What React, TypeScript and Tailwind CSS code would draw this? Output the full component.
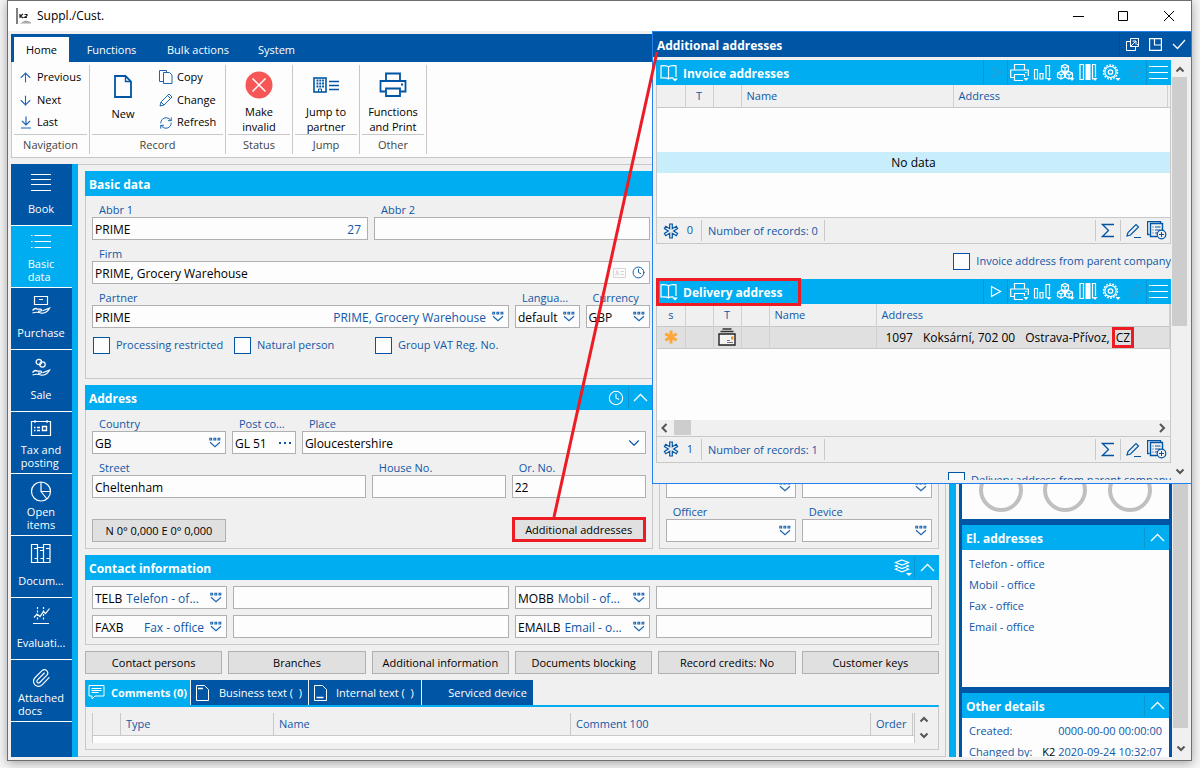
import React from "react";
import { ArrowDown, ArrowUp, ChevronDown, ChevronUp, Clock, Paperclip, Pin, RefreshCw } from "lucide-react";

/* ---------- icons ---------- */

function LookupIcon() {
  return (
    <svg width="12" height="11" viewBox="0 0 12 11" fill="none" stroke="#1c66b3">
      <path d="M.8 1.2h1.8v1.8H.8zM4.9 1.2h1.8v1.8H4.9zM9 1.2h1.8v1.8H9z" strokeWidth="1.1" />
      <path d="M1 5.2l5 4.6 5-4.6" strokeWidth="1.2" />
    </svg>
  );
}

function PrinterIcon() {
  return (
    <svg width="28" height="28" viewBox="0 0 28 28" fill="none" stroke="#0055a5" strokeWidth="1.8">
      <path d="M7 10V2.500h14V10M6.500 20.500H1.500V10h25v10.500h-5" />
      <path d="M7 17.500h14V25H7z" />
      <path d="M22 13.500h2" />
    </svg>
  );
}

function LogoIcon() {
  return (
    <svg width="17" height="17" viewBox="0 0 17 17">
      <rect x="0" y="0" width="2" height="16" fill="#808080" />
      <path d="M4 6v4M7 6L4.500 8 7 10M8.500 6.500h2.500v1.200L8.500 9.500H11" stroke="#222" strokeWidth="1.200" fill="none" />
      <path d="M3 15.500c3 0 4-3 7-3l5 1.500v1.500z" fill="#aaa" />
    </svg>
  );
}

function FileIcon() {
  return (
    <svg width="18" height="23" viewBox="0 0 18 23" fill="none" stroke="#0055a5" strokeWidth="1.800">
      <path d="M1 1h10.500L17 6.500V22H1z" />
      <path d="M11.500 1v5.500H17" strokeWidth="1.400" />
    </svg>
  );
}

function CopyIcon() {
  return (
    <svg width="14" height="14" viewBox="0 0 14 14" fill="none" stroke="#1c66b3">
      <path d="M4.500 11.500h-4v-11h7v2" />
      <path d="M4.500 2.500h6l2.500 2.500v8.500H4.500z" />
    </svg>
  );
}

function PencilIcon() {
  return (
    <svg width="14" height="14" viewBox="0 0 14 14" fill="none" stroke="#1c66b3">
      <path d="M1 13l1-4L10 1l3 3-8 8zM8.500 2.500l3 3M2 9l3 3" />
    </svg>
  );
}

function LastIcon() {
  return (
    <svg width="12" height="13" viewBox="0 0 12 13" fill="none" stroke="#1c66b3" strokeWidth="1.200">
      <path d="M6 .5v8.500M2 5l4 4 4-4M1 12h10" />
    </svg>
  );
}

function InvalidIcon() {
  return (
    <svg width="28" height="28" viewBox="0 0 28 28">
      <circle cx="14" cy="14" r="13.500" fill="#f75656" />
      <path d="M7.500 7.500l13 13M20.500 7.500l-13 13" stroke="#fff" strokeWidth="1.500" />
    </svg>
  );
}

function PartnerIcon() {
  return (
    <svg width="27" height="17" viewBox="0 0 27 17" fill="none" stroke="#0055a5">
      <rect x="1" y="1" width="12" height="14" strokeWidth="1.600" />
      <path d="M3.500 3.500h7.500M3.500 6.500h7.500M3.500 9.500h7.500" strokeWidth="1.800" strokeDasharray="1.900 .9" />
      <path d="M5.500 15v-3h3v3" />
      <path d="M16 4.500h10M16 8.500h10M16 12.500h10" strokeWidth="1.400" />
    </svg>
  );
}

function BookIcon() {
  return (
    <svg width="18" height="18" viewBox="0 0 18 18" fill="none" stroke="#fff" strokeWidth="1.200">
      <path d="M8.500 3C7.500 1.500 5 1.500 1 1.800V14c4-.3 6.500-.3 7.500 1 1-1.300 2.500-1.300 5-1.200M8.500 3C9.500 1.500 12 1.500 16 1.800V13M8.500 3v12" />
      <path d="M12 14.500h6l-3 3z" fill="#fff" stroke="none" />
    </svg>
  );
}

function Caret() {
  return <path d="M13.500 15h5l-2.500 3z" fill="#fff" stroke="none" />;
}

function ToolSvg({ children }: { children: React.ReactNode }) {
  return (
    <svg width="19" height="19" viewBox="0 0 19 19" fill="none" stroke="#fff" strokeWidth="1.200">
      {children}
      <Caret />
    </svg>
  );
}

function PrintTool() {
  return (
    <ToolSvg>
      <path d="M4.500 7V1.500h10V7M4 14.500H.7V7h17.600v6" />
      <path d="M13 17.500H4.500v-6h10V14M15 9.500h1.500" />
    </ToolSvg>
  );
}

function ChartTool() {
  return (
    <ToolSvg>
      <path d="M1.500 6.500h3v9.500h-3zM7 10.500h3v5.500H7zM16.500 14V2.500h-3.500V16" />
    </ToolSvg>
  );
}

function CubesTool() {
  return (
    <ToolSvg>
      <path d="M9 1.500l3.500 1.700v4L9 9 5.500 7.200v-4zM5 8.500l3.500 1.700v4L5 16l-3.500-1.800v-4zM13 8.500l3.500 1.700v4L13 16l-3.500-1.800v-4z" />
      <path d="M5.500 3.200L9 5l3.500-1.800M9 5v4M1.500 10.200L5 12l3.500-1.800M5 12v4M9.500 10.200L13 12l3.500-1.800M13 12v4" />
    </ToolSvg>
  );
}

function ColumnsTool() {
  return (
    <ToolSvg>
      <path d="M1 1.500h3.500v15H1zM16.500 14V1.500h-3v15" />
      <path d="M6.500 1h5v16h-5z" fill="#fff" stroke="none" />
    </ToolSvg>
  );
}

function GearTool() {
  return (
    <ToolSvg>
      <circle cx="8.500" cy="9" r="7" strokeWidth="1.400" strokeDasharray="2 1.142" />
      <circle cx="8.500" cy="9" r="5.600" />
      <circle cx="8.500" cy="9" r="2.200" strokeWidth="1.300" />
    </ToolSvg>
  );
}

function LayersIcon() {
  return (
    <svg width="19" height="19" viewBox="0 0 19 19" fill="none" stroke="#fff" strokeWidth="1.200">
      <path d="M8 2l6.500 2.500L8 7 1.500 4.500zM3.500 7L1.500 8 8 10.500 14.500 8l-2-1M3.500 10.300l-2 1L8 13.800l6.500-2.500-2-1" />
      <path d="M12 15h6l-3 3z" fill="#fff" stroke="none" />
    </svg>
  );
}

function AsteriskIcon() {
  return (
    <svg width="16" height="16" viewBox="0 0 16 16" fill="none" stroke="#0055a5">
      <path
        d="M6.700 1h2.600v4.700l4-2.400 1.300 2.200L10.700 8l3.900 2.500-1.300 2.200-4-2.400V15H6.700v-4.700l-4 2.400-1.300-2.200L5.300 8 1.400 5.500l1.300-2.200 4 2.400z"
        strokeWidth="1.200"
      />
    </svg>
  );
}

function RecordMark() {
  return (
    <svg width="14" height="14" viewBox="0 0 14 14" className="mx-auto" stroke="#ffa63a" strokeWidth="3">
      <path d="M7 .5v13M1.300 3.700l11.400 6.600M12.700 3.700L1.300 10.300" />
    </svg>
  );
}

function CardIcon() {
  return (
    <svg width="18" height="18" viewBox="0 0 18 18" className="mx-auto" fill="none">
      <path d="M4.500 1h9M2.500 3.500h13" stroke="#333" strokeWidth="1.300" />
      <path d="M1 6h16v11H1z" fill="#f4f4f4" stroke="#222" strokeWidth="1.400" />
      <path d="M13 8.500h2.500v3H13z" fill="#f78f2a" />
      <path d="M9 12.500h3M9 14.500h6" stroke="#777" />
    </svg>
  );
}

function ScrollArrow({ d, className = "" }: { d: string; className?: string }) {
  return (
    <svg width="12" height="12" viewBox="0 0 12 12" fill="none" stroke="#555" strokeWidth="2" className={className}>
      <path d={d} />
    </svg>
  );
}

const arrowUp = "M2.500 7.500L6 4l3.500 3.500";
const arrowDown = "M2.500 3.500L6 7l3.500-3.500";
const arrowLeft = "M7.500 2L3.500 6l4 4";
const arrowRight = "M4 2l4 4-4 4";

/* ---------- side navigation ---------- */

function NavSvg({ children }: { children: React.ReactNode }) {
  return (
    <svg width="22" height="22" viewBox="0 0 22 22" fill="none" stroke="#fff" strokeWidth="1.200">
      {children}
    </svg>
  );
}

const hand = "M2.500 15.500c1.500-1.800 3.500-2.500 5-1.300h3.500c1.200.8.500 2-.8 2H8M12.500 15.800l7-2.600c-1.500 2.800-4.500 5-8 5-2.500-1-5.500-1.500-9-.2";

const navItems = [
  { label: "Book", icon: <NavSvg><path d="M1 3.500h20M1 8.500h20M1 13.500h20M1 19.500h20" /></NavSvg> },
  {
    label: "Basic\ndata",
    active: true,
    icon: (
      <NavSvg>
        <path d="M4.500 2.500H21M4.500 8.500H21M4.500 14.500H21" />
        <path d="M1 2.500h1.500M1 8.500h1.500M1 14.500h1.500" />
      </NavSvg>
    ),
  },
  {
    label: "Purchase",
    icon: (
      <NavSvg>
        <path d="M4.500 1.500h13v8h-13zM9 4.500h4" />
        <path d={hand} />
      </NavSvg>
    ),
  },
  {
    label: "Sale",
    icon: (
      <NavSvg>
        <circle cx="8.800" cy="5" r="2.700" />
        <circle cx="12.500" cy="7.500" r="2.700" />
        <path d={hand} />
      </NavSvg>
    ),
  },
  {
    label: "Tax and\nposting",
    icon: (
      <NavSvg>
        <path d="M1.500 2.500h19v14h-19zM5 1v3M17 1v3" />
        <path d="M4 8.500h1.500M4 11.500h1.500M7 8.500h3M7 11.500h3M12.500 7.500h4v4h-4z" strokeWidth="1.400" />
      </NavSvg>
    ),
  },
  {
    label: "Open\nitems",
    icon: (
      <NavSvg>
        <circle cx="11" cy="10.500" r="9.500" />
        <path d="M11 1v9.500h9.500M11 10.500l6 7.500" />
      </NavSvg>
    ),
  },
  {
    label: "Docum...",
    icon: (
      <NavSvg>
        <path d="M1.500 1.500h6v18h-6zM7.500 4.500h6v15h-6zM13.500 1.500h6.500v18h-6.500z" />
        <path d="M4 5.500h3.500M4.500 15.500h3M10 7.500h3.500M10.500 15.500h3M16 5.500h3.500M16.500 15.500h3" />
      </NavSvg>
    ),
  },
  {
    label: "Evaluati...",
    icon: (
      <NavSvg>
        <path d="M4 12.500l3-3.500 3 2.500 3.500-5 2 2 4-5M3 18.500h16" />
        <path d="M7.500 2v14M13.500 2v14" strokeDasharray="2 1.500" />
      </NavSvg>
    ),
  },
  { label: "Attached\ndocs", icon: <Paperclip size={20} color="#fff" strokeWidth={1.400} /> },
];

function SideNav() {
  return (
    <nav className="w-[67px] shrink-0 border-r-6 border-[#00adf0] bg-[#0055a5]">
      {navItems.map((item) => (
        <button
          key={item.label}
          className={`flex h-[62px] w-full flex-col items-center border-b border-white pb-1 pr-px text-white ${item.active ? "bg-[#00adf0]" : ""}`}
        >
          <span className="flex h-[31px] items-center pt-1">{item.icon}</span>
          <span className="flex h-[26px] items-center whitespace-pre text-left text-[11px] leading-[13px]">{item.label}</span>
        </button>
      ))}
    </nav>
  );
}

/* ---------- ribbon ---------- */

function RibbonGroup({ title, width, children }: { title: string; width: string; children: React.ReactNode }) {
  return (
    <div className={`my-[3px] flex shrink-0 flex-col border-r border-[#c8c8c8] px-[2px] ${width}`}>
      <div className="flex h-[70px] border-b border-[#c8c8c8] pt-px">{children}</div>
      <div className="pb-px pt-[2px] text-center leading-4 text-[#444]">{title}</div>
    </div>
  );
}

function SmallAction({ icon, label }: { icon: React.ReactNode; label: string }) {
  return (
    <button className="flex h-[23px] items-center gap-1 pl-1">
      <span className="flex w-[15px] justify-center">{icon}</span>
      {label}
    </button>
  );
}

function BigAction({ icon, label }: { icon: React.ReactNode; label: string }) {
  return (
    <button className="flex w-full flex-col items-center">
      <span className="flex h-10 items-center">{icon}</span>
      <span className="whitespace-pre leading-[15px]">{label}</span>
    </button>
  );
}

function Ribbon() {
  return (
    <div>
      <div className="flex h-7 bg-[#0055a5] pl-[3px] pt-[3px] text-white [&>button]:pt-px">
        <button className="w-[55px] bg-[#fdfdfd] text-black">Home</button>
        <button className="w-[85px]">Functions</button>
        <button className="w-[88px]">Bulk actions</button>
        <button className="w-[69px]">System</button>
      </div>
      <div className="flex border border-t-0 border-[#c8c8c8] bg-[#fdfdfd]">
        <RibbonGroup title="Navigation" width="w-[78px]">
          <div className="flex flex-col">
            <SmallAction icon={<ArrowUp size={15} strokeWidth={1.700} color="#1c66b3" />} label="Previous" />
            <SmallAction icon={<ArrowDown size={15} strokeWidth={1.700} color="#1c66b3" />} label="Next" />
            <SmallAction icon={<LastIcon />} label="Last" />
          </div>
        </RibbonGroup>
        <RibbonGroup title="Record" width="w-[136px]">
          <div className="w-[62px]">
            <BigAction icon={<FileIcon />} label="New" />
          </div>
          <div className="flex flex-col">
            <SmallAction icon={<CopyIcon />} label="Copy" />
            <SmallAction icon={<PencilIcon />} label="Change" />
            <SmallAction icon={<RefreshCw size={14} strokeWidth={1.700} color="#1c66b3" />} label="Refresh" />
          </div>
        </RibbonGroup>
        <RibbonGroup title="Status" width="w-[67px]">
          <BigAction icon={<InvalidIcon />} label={"Make\ninvalid"} />
        </RibbonGroup>
        <RibbonGroup title="Jump" width="w-[67px]">
          <BigAction icon={<PartnerIcon />} label={"Jump to\npartner"} />
        </RibbonGroup>
        <RibbonGroup title="Other" width="w-[67px]">
          <BigAction icon={<PrinterIcon />} label={"Functions\nand Print"} />
        </RibbonGroup>
      </div>
    </div>
  );
}

/* ---------- form parts ---------- */

type PanelProps = { title: string; tools?: React.ReactNode; className?: string; children: React.ReactNode };

function Panel({ title, tools, className = "", children }: PanelProps) {
  return (
    <section className={className}>
      <header className="flex h-[25px] items-center bg-[#00adf0] pl-1 text-white">
        <h2 className="flex-1 pt-[2px] text-xs font-bold">{title}</h2>
        {tools}
      </header>
      <div className="border border-t-0 border-[#c8c8c8] p-[6px]">{children}</div>
    </section>
  );
}

function Collapse() {
  return (
    <button aria-label="Collapse" className="my-[2px] flex w-[25px] items-center justify-center self-stretch border-l border-[#0b96d0]">
      <svg width="15" height="9" viewBox="0 0 15 9" fill="none" stroke="#fff" strokeWidth="1.300"><path d="M1 8l6.500-6.500L14 8" /></svg>
    </button>
  );
}

type FieldProps = {
  id: string;
  label?: string;
  name?: string;
  value?: string;
  note?: string;
  icon?: React.ReactNode;
  className?: string;
};

function Field({ id, label, name, value = "", note, icon, className = "" }: FieldProps) {
  const cut = note?.endsWith("...");
  return (
    <div className={`min-w-0 ${className}`}>
      {label && <label htmlFor={id} className="block h-[15px] truncate pl-[7px] leading-[15px] text-[#1057a7]">{label}</label>}
      <div className="flex h-[23px] items-center border border-[#b0b0b0] bg-[#fdfdfd] px-[2px] text-xs">
        <input
          id={id}
          aria-label={label ? undefined : name}
          defaultValue={value}
          className={`bg-transparent pt-[2px] outline-none ${note ? "field-sizing-content shrink-0" : "w-full min-w-0"}`}
        />
        {note && <span className={`min-w-0 flex-1 whitespace-nowrap px-1 pt-[2px] text-[#1057a7] ${cut ? "text-left" : "text-right"}`}>{note}</span>}
        {icon && <span className="flex shrink-0 items-center px-[2px]">{icon}</span>}
      </div>
    </div>
  );
}

function Lookup() {
  return <button aria-label="Look up"><LookupIcon /></button>;
}

function CheckBox({ id, label, className = "" }: { id: string; label: string; className?: string }) {
  return (
    <div className={`flex items-center gap-[6px] whitespace-nowrap text-[#1057a7] ${className}`}>
      <input id={id} type="checkbox" className="h-[17px] w-[17px] appearance-none border border-[#0055a5] bg-[#fdfdfd]" />
      <label htmlFor={id}>{label}</label>
    </div>
  );
}

function BasicData() {
  return (
    <Panel title="Basic data">
      <div className="grid grid-cols-12 gap-[6px] pb-[15px]">
        <Field id="abbr1" label="Abbr 1" value="PRIME" note="27" className="col-span-4" />
        <Field id="abbr2" label="Abbr 2" className="col-span-4" />
        <Field
          id="firm"
          label="Firm"
          value="PRIME, Grocery Warehouse"
          className="col-span-8 col-start-1"
          icon={
            <span className="flex items-center gap-[6px]">
              <svg width="13" height="10" viewBox="0 0 13 10" fill="none" stroke="#d5d5d5">
                <path d="M.5.500h12v9H.5zM2.500 7.500l1.700-5 1.700 5M3 6h2.500M7.500 3.500H11M7.500 6.500H11" />
              </svg>
              <Clock size={13} strokeWidth={1.800} color="#1057a7" />
            </span>
          }
        />
        <Field id="partner" label="Partner" value="PRIME" note="PRIME, Grocery Warehouse" icon={<Lookup />} className="col-span-6 col-start-1" />
        <Field id="language" label="Langua..." value="default" icon={<Lookup />} />
        <Field id="currency" label="Currency" value="GBP" icon={<Lookup />} />
        <CheckBox id="restricted" label="Processing restricted" className="col-span-2 col-start-1 h-[23px] pl-px" />
        <CheckBox id="natural" label="Natural person" className="col-span-2 h-[23px] pl-px" />
        <CheckBox id="groupvat" label="Group VAT Reg. No." className="col-span-2 h-[23px] pl-px" />
      </div>
    </Panel>
  );
}

function Address() {
  return (
    <Panel
      title="Address"
      className="min-w-0 flex-[567]"
      tools={
        <>
          <button aria-label="History" className="px-1"><Clock size={16} strokeWidth={1.600} /></button>
          <Collapse />
        </>
      }
    >
      <div className="grid grid-cols-8 gap-[6px]">
        <Field id="country" label="Country" value="GB" icon={<Lookup />} className="col-span-2" />
        <Field
          id="postcode"
          label="Post co..."
          value="GL 51"
          icon={
            <button aria-label="Choose post code">
              <svg width="12" height="2" viewBox="0 0 12 2" fill="#1057a7"><path d="M0 0h2v2H0zM5 0h2v2H5zM10 0h2v2h-2z" /></svg>
            </button>
          }
        />
        <div className="col-span-5">
          <label htmlFor="place" className="block h-[15px] pl-[7px] leading-[15px] text-[#1057a7]">Place</label>
          <div className="grid h-[23px] items-center border border-[#b0b0b0] bg-[#fdfdfd] text-xs">
            <select id="place" className="col-start-1 row-start-1 appearance-none pl-[2px] pt-[2px] outline-none">
              <option>Gloucestershire</option>
            </select>
            <ChevronDown size={18} strokeWidth={1.500} color="#1057a7" className="pointer-events-none col-start-1 row-start-1 mr-[2px] justify-self-end" />
          </div>
        </div>
        <Field id="street" label="Street" value="Cheltenham" className="col-span-4" />
        <Field id="house" label="House No." className="col-span-2" />
        <Field id="orno" label="Or. No." value="22" className="col-span-2" />
        <button className="col-span-2 mt-[15px] h-[23px] border border-[#b0b0b0] bg-[#e0e0e0] pt-px">N 0° 0,000 E 0° 0,000</button>
        <button className="col-span-2 col-start-7 mt-[13px] h-[25px] whitespace-nowrap border-3 border-[#ed1c24] bg-[#e0e0e0] pt-px">Additional addresses</button>
      </div>
    </Panel>
  );
}

function Responsible() {
  return (
    <Panel title="Responsible" className="min-w-0 flex-[280]">
      <div className="grid grid-cols-2 gap-[6px]">
        <Field id="centre" label="Centre" icon={<Lookup />} />
        <Field id="order" label="Order" icon={<Lookup />} />
        <Field id="contract" label="Contract" icon={<Lookup />} />
        <Field id="stock" label="Stock" icon={<Lookup />} />
        <Field id="officer" label="Officer" icon={<Lookup />} />
        <Field id="device" label="Device" icon={<Lookup />} />
      </div>
    </Panel>
  );
}

function Contacts() {
  return (
    <Panel
      title="Contact information"
      tools={
        <>
          <button aria-label="Layers" className="px-px"><LayersIcon /></button>
          <Collapse />
        </>
      }
    >
      <div className="grid grid-cols-12 gap-[6px]">
        <Field id="telb" name="Contact type" value="TELB" note="Telefon - of..." icon={<Lookup />} className="col-span-2" />
        <Field id="telv" name="Telephone" className="col-span-4" />
        <Field id="mobb" name="Contact type" value="MOBB" note="Mobil - of..." icon={<Lookup />} className="col-span-2" />
        <Field id="mobv" name="Mobile" className="col-span-4" />
        <Field id="faxb" name="Contact type" value="FAXB" note="Fax - office" icon={<Lookup />} className="col-span-2" />
        <Field id="faxv" name="Fax" className="col-span-4" />
        <Field id="mailb" name="Contact type" value="EMAILB" note="Email - o..." icon={<Lookup />} className="col-span-2" />
        <Field id="mailv" name="Email" className="col-span-4" />
      </div>
    </Panel>
  );
}

const actions = ["Contact persons", "Branches", "Additional information", "Documents blocking", "Record credits: No", "Customer keys"];

function PageIcon({ d }: { d: string }) {
  return (
    <svg width="13" height="16" viewBox="0 0 13 16" fill="none" stroke="#fff">
      <path d="M.5.500h8l4 4v11H.5z" />
      <path d={d} strokeWidth="1.500" />
    </svg>
  );
}

function Comments() {
  return (
    <div>
      <div className="flex h-[25px] gap-px text-white">
        <button className="flex w-[105px] items-center gap-[6px] whitespace-nowrap bg-[#00adf0] pl-[3px] font-bold">
          <svg width="17" height="15" viewBox="0 0 17 15" fill="none" stroke="#fff" className="shrink-0">
            <path d="M1 .5h15v10.500H7L4 14v-3H1zM3.500 3.500h10M3.500 5.500h10M3.500 7.500h7" />
          </svg>
          <span className="pt-px">Comments (0)</span>
        </button>
        <button className="flex w-[117px] items-center gap-[10px] bg-[#0055a5] pl-[5px]">
          <PageIcon d="M2 3.500h5" />
          <span className="pt-px">Business text (&nbsp; )</span>
        </button>
        <button className="flex w-[112px] items-center gap-[9px] bg-[#0055a5] pl-[5px]">
          <PageIcon d="M2.500 12.500h7" />
          <span className="pt-px">Internal text (&nbsp; )</span>
        </button>
        <button className="w-[111px] bg-[#0055a5] pl-5 pt-px">Serviced device</button>
      </div>
      <div className="flex border border-t-2 border-[#c8c8c8] border-t-[#00adf0] p-[6px]">
        <table className="flex-1 table-fixed border-x border-[#c8c8c8] text-left text-[#1057a7]">
          <thead>
            <tr className="h-[22px] border-b border-[#c8c8c8] [&>th]:border-r [&>th]:border-[#c8c8c8] [&>th]:px-[5px] [&>th]:font-normal">
              <th className="w-7" />
              <th className="w-[153px]">Type</th>
              <th className="w-[297px]">Name</th>
              <th>Comment 100</th>
              <th className="w-[42px]">Order</th>
              <th className="w-[2px] !border-0 !p-0" />
            </tr>
          </thead>
          <tbody>
            <tr className="h-2 bg-[#fdfdfd]"><td colSpan={6} /></tr>
          </tbody>
        </table>
        <div className="flex w-[17px] flex-col items-center justify-between py-px">
          <ScrollArrow d={arrowUp} />
          <ScrollArrow d={arrowDown} />
        </div>
      </div>
    </div>
  );
}

/* ---------- right sidebar ---------- */

function InfoPanel({ title, className = "", children }: { title: string; className?: string; children: React.ReactNode }) {
  return (
    <section className="shrink-0">
      <header className="flex h-[25px] items-center bg-[#00adf0] pl-1 text-white">
        <h2 className="flex-1 pt-[2px] text-xs font-bold">{title}</h2>
        <Collapse />
      </header>
      <div className={`bg-[#fdfdfd] px-[7px] ${className}`}>{children}</div>
    </section>
  );
}

function Sidebar() {
  return (
    <aside className="flex w-[213px] shrink-0 flex-col gap-[6px] overflow-hidden bg-[#0055a5] p-[3px] leading-[21px] text-[#1057a7] contain-size">
      <InfoPanel title="Overview" className="flex h-[327px] items-end justify-around pb-[7px]">
        <span className="h-11 w-11 rounded-full border-4 border-[#c0c0c0]" />
        <span className="h-11 w-11 rounded-full border-4 border-[#c0c0c0]" />
        <span className="h-11 w-11 rounded-full border-4 border-[#c0c0c0]" />
      </InfoPanel>
      <InfoPanel title="El. addresses" className="h-[137px] pt-[3px]">
        <p>Telefon - office</p>
        <p>Mobil - office</p>
        <p>Fax - office</p>
        <p>Email - office</p>
      </InfoPanel>
      <InfoPanel title="Other details" className="h-[60px] pt-[2px]">
        <p className="flex justify-between"><span>Created:</span><span>0000-00-00 00:00:00</span></p>
        <p className="flex justify-between"><span>Changed by:</span><span><span className="text-black">K2</span> 2020-09-24 10:32:07</span></p>
      </InfoPanel>
    </aside>
  );
}

/* ---------- additional addresses window ---------- */

function GridHeader({ title, idle }: { title: string; idle?: boolean }) {
  return (
    <header className="flex h-[25px] items-center bg-[#00adf0] pl-1 text-white [&>button]:flex [&>button]:h-full [&>button]:items-center [&>button]:justify-center">
      <BookIcon />
      <h2 className="flex-1 pl-[5px] pt-[2px] text-xs font-bold">{title}</h2>
      <button aria-label="Run" className={`w-6 border-l border-[#0b96d0] ${idle ? "text-[#2f9fd0]" : ""}`}>
        <svg width="12" height="13" viewBox="0 0 12 13" fill="none" stroke="currentColor" strokeWidth="1.200"><path d="M1.500 1.500l9 5-9 5z" /></svg>
      </button>
      <button aria-label="Print" className="w-6 border-l border-[#0b96d0]"><PrintTool /></button>
      <button aria-label="Chart" className="w-[23px]"><ChartTool /></button>
      <button aria-label="Cubes" className="w-[23px]"><CubesTool /></button>
      <button aria-label="Columns" className="w-[23px]"><ColumnsTool /></button>
      <button aria-label="Settings" className="w-[23px]"><GearTool /></button>
      <button aria-label="Pin" className="w-[23px] text-[#3a97c4]"><Pin size={16} strokeWidth={1.400} className="rotate-45" /></button>
      <button aria-label="Menu" className="w-[25px] border-l border-[#0b96d0] pr-px">
        <svg width="19" height="13" viewBox="0 0 19 13" stroke="#fff"><path d="M0 .5h19M0 6.500h19M0 12.500h19" /></svg>
      </button>
    </header>
  );
}

function GridFooter({ count }: { count: number }) {
  return (
    <footer className="flex h-[26px] items-center border border-t-0 border-[#c8c8c8] pl-[6px] pr-px text-[#1057a7]">
      <AsteriskIcon />
      <span className="w-[22px] text-center">{count}</span>
      <span className="border-x border-[#c8c8c8] px-[6px] leading-[21px]">Number of records: {count}</span>
      <span className="flex-1" />
      <button aria-label="Sum" className="flex h-[21px] w-[26px] items-center justify-center border-x border-[#c8c8c8]">
        <svg width="14" height="15" viewBox="0 0 14 15" fill="none" stroke="#0055a5" strokeWidth="1.300"><path d="M13 1.500H1.500l6 6-6 6H13" /></svg>
      </button>
      <button aria-label="Edit" className="flex w-6 justify-center">
        <svg width="15" height="15" viewBox="0 0 15 15" fill="none" stroke="#0055a5" strokeWidth="1.200"><path d="M1 13l1-3.500L10 1.500l2.500 2.500-8 8zM8 14.500h7" /></svg>
      </button>
      <button aria-label="Add" className="flex w-6 justify-center">
        <svg width="20" height="19" viewBox="0 0 20 19" fill="none" stroke="#0055a5">
          <path d="M2.500 13.500h-2V.5h13v2M10 15.500H3.500v-13h12V9" strokeWidth="1.400" />
          <path d="M5.500 6h1M8 6h5.500M5.500 9h1M8 9h5M5.500 12h1M8 12h2" />
          <circle cx="14.500" cy="13.500" r="4.300" fill="#f0f0f0" strokeWidth="1.200" />
          <path d="M12 13.500h5M14.500 11v5" />
        </svg>
      </button>
    </footer>
  );
}

const headRow = "h-[22px] border-b border-[#c8c8c8] bg-[#f0f0f0] text-[#1057a7] [&>th]:border-r [&>th]:border-[#d0d0d0] [&>th]:px-[5px] [&>th]:font-normal";

function AddressesWindow() {
  return (
    <div role="dialog" aria-label="Additional addresses" className="absolute -right-px top-[30px] w-[540px] border border-[#2383ee] bg-[#f0f0f0]">
      <header className="flex h-[25px] items-center bg-[#0055a5] pl-1 text-white">
        <h1 className="flex-1 pt-[2px] text-xs font-bold">Additional addresses</h1>
        <div className="flex items-center gap-[10px] self-stretch border-l border-[#004a94] pl-[6px] pr-[5px]">
          <svg width="13" height="13" viewBox="0 0 13 13" fill="none" stroke="#fff"><path d="M4 3.500H.5v9h9V9M6.500.500h6v6h-1.500M4.500.500h8v8h-8zM4 9l6-6M6.500 3H10v3.500" /></svg>
          <svg width="13" height="13" viewBox="0 0 13 13" fill="none" stroke="#fff"><path d="M.6.600h11.800v11.800H.6zM5.500.5V7h7" strokeWidth="1.200" /></svg>
          <svg width="14" height="11" viewBox="0 0 14 11" fill="none" stroke="#fff" strokeWidth="1.300"><path d="M1 5l4.500 4.500L13 1" /></svg>
        </div>
      </header>
      <div className="flex gap-px py-[3px] pl-[3px] pr-1">
        <div className="h-[420px] min-w-0 flex-1 overflow-hidden">
          <GridHeader title="Invoice addresses" idle />
          <div className="border border-t-0 border-[#c8c8c8] bg-[#fdfdfd]">
            <table className="w-full table-fixed text-left">
              <thead>
                <tr className={headRow}>
                  <th className="w-7" />
                  <th className="w-7 text-center">T</th>
                  <th className="w-7" />
                  <th className="w-[212px]">Name</th>
                  <th>Address</th>
                  <th className="w-[3px] !border-0 !p-0" />
                </tr>
              </thead>
              <tbody>
                <tr className="h-[45px]"><td colSpan={6} /></tr>
                <tr className="h-[21px] bg-[#c9eefb]"><td colSpan={6} className="pt-px text-center text-xs">No data</td></tr>
                <tr className="h-11"><td colSpan={6} /></tr>
              </tbody>
            </table>
          </div>
          <GridFooter count={0} />
          <CheckBox id="invparent" label="Invoice address from parent company" className="h-[35px] justify-end" />

          <div className="relative">
            <GridHeader title="Delivery address" />
            <span className="pointer-events-none absolute -top-px left-0 h-7 w-[145px] border-3 border-[#ed1c24]" />
          </div>
          <div className="border border-t-0 border-[#c8c8c8] bg-[#fdfdfd]">
            <table className="w-full table-fixed text-left">
              <thead>
                <tr className={headRow}>
                  <th className="w-7 text-center">s</th>
                  <th className="w-7" />
                  <th className="w-7 text-center">T</th>
                  <th className="w-7" />
                  <th className="w-[107px]">Name</th>
                  <th>Address</th>
                </tr>
              </thead>
              <tbody>
                <tr className="h-[22px] border-b border-[#c8c8c8] bg-[#e0e0e0] text-xs [&>td]:border-r [&>td]:border-[#d0d0d0]">
                  <td><RecordMark /></td>
                  <td />
                  <td><CardIcon /></td>
                  <td />
                  <td />
                  <td>
                    <span className="flex items-center gap-[10px] whitespace-nowrap pl-[9px] leading-[15px]">
                      <span>1097</span>
                      <span>Koksární, 702 00</span>
                      <span className="flex items-center gap-[2px]">
                        Ostrava-Přívoz,
                        <span className="border-3 border-[#ed1c24] px-px">CZ</span>
                      </span>
                    </span>
                  </td>
                </tr>
              </tbody>
            </table>
            <div className="mt-[71px] flex h-4 items-center bg-[#f0f0f0] px-[2px]">
              <ScrollArrow d={arrowLeft} />
              <span className="ml-[3px] h-[15px] w-[17px] bg-[#cdcdcd]" />
              <span className="flex-1" />
              <ScrollArrow d={arrowRight} />
            </div>
          </div>
          <GridFooter count={1} />
          <CheckBox id="delparent" label="Delivery address from parent company" className="h-[35px] justify-end" />
        </div>
        <div className="flex w-[15px] flex-col items-center justify-between pt-1">
          <ScrollArrow d={arrowUp} />
          <span className="mb-auto mt-px h-[249px] w-full bg-[#cdcdcd]" />
          <ScrollArrow d={arrowDown} className="mb-[2px]" />
        </div>
      </div>

      {/* pointer from the button to this window */}
      <svg width="110" height="470" viewBox="0 0 110 470" className="pointer-events-none absolute -left-[103px] top-[18px]">
        <path d="M4 467L107 2" stroke="#ed1c24" strokeWidth="3" />
      </svg>
    </div>
  );
}

/* ---------- page ---------- */

export default function App() {
  return (
    <div className="min-h-screen bg-[#f6f6f6] pb-[7px] pl-[7px] pr-2 font-['Open_Sans',sans-serif] text-[11px] text-black">
      <div className="relative border border-[#6e6e6e] bg-[#f0f0f0] shadow-[0_2px_10px_rgba(0,0,0,0.35)]">
        <header className="flex h-[30px] items-center bg-white pl-2 text-xs">
          <LogoIcon />
          <span className="flex-1 pl-1">Suppl./Cust.</span>
          <svg width="102" height="12" viewBox="0 0 102 12" fill="none" stroke="#000" className="mr-4">
            <path d="M0 6.500h11M45.500 1.500h9v9h-9zM91 1l10 10M101 1L91 11" />
          </svg>
        </header>
        <div className="flex flex-col gap-[6px] px-[3px] py-[3px]">
          <Ribbon />
          <div className="flex">
            <SideNav />
            <main className="flex min-w-0 flex-1 flex-col gap-[6px] border border-l-0 border-[#c8c8c8] py-[6px] pl-[7px] pr-[6px]">
              <BasicData />
              <div className="flex gap-[6px]">
                <Address />
                <Responsible />
              </div>
              <Contacts />
              <div className="grid grid-cols-6 gap-[6px]">
                {actions.map((label) => (
                  <button key={label} className="h-[23px] whitespace-nowrap border border-[#b0b0b0] bg-[#e0e0e0] pt-px">{label}</button>
                ))}
              </div>
              <Comments />
            </main>
            <div className="mx-[3px] w-[7px] shrink-0 bg-[#00adf0]" />
            <Sidebar />
            <div className="flex w-4 shrink-0 flex-col items-center pl-px">
              <span className="w-full flex-1 bg-[#cdcdcd]" />
              <ScrollArrow d={arrowDown} className="mb-[2px] mt-[15px]" />
            </div>
          </div>
        </div>
        <AddressesWindow />
      </div>
    </div>
  );
}
